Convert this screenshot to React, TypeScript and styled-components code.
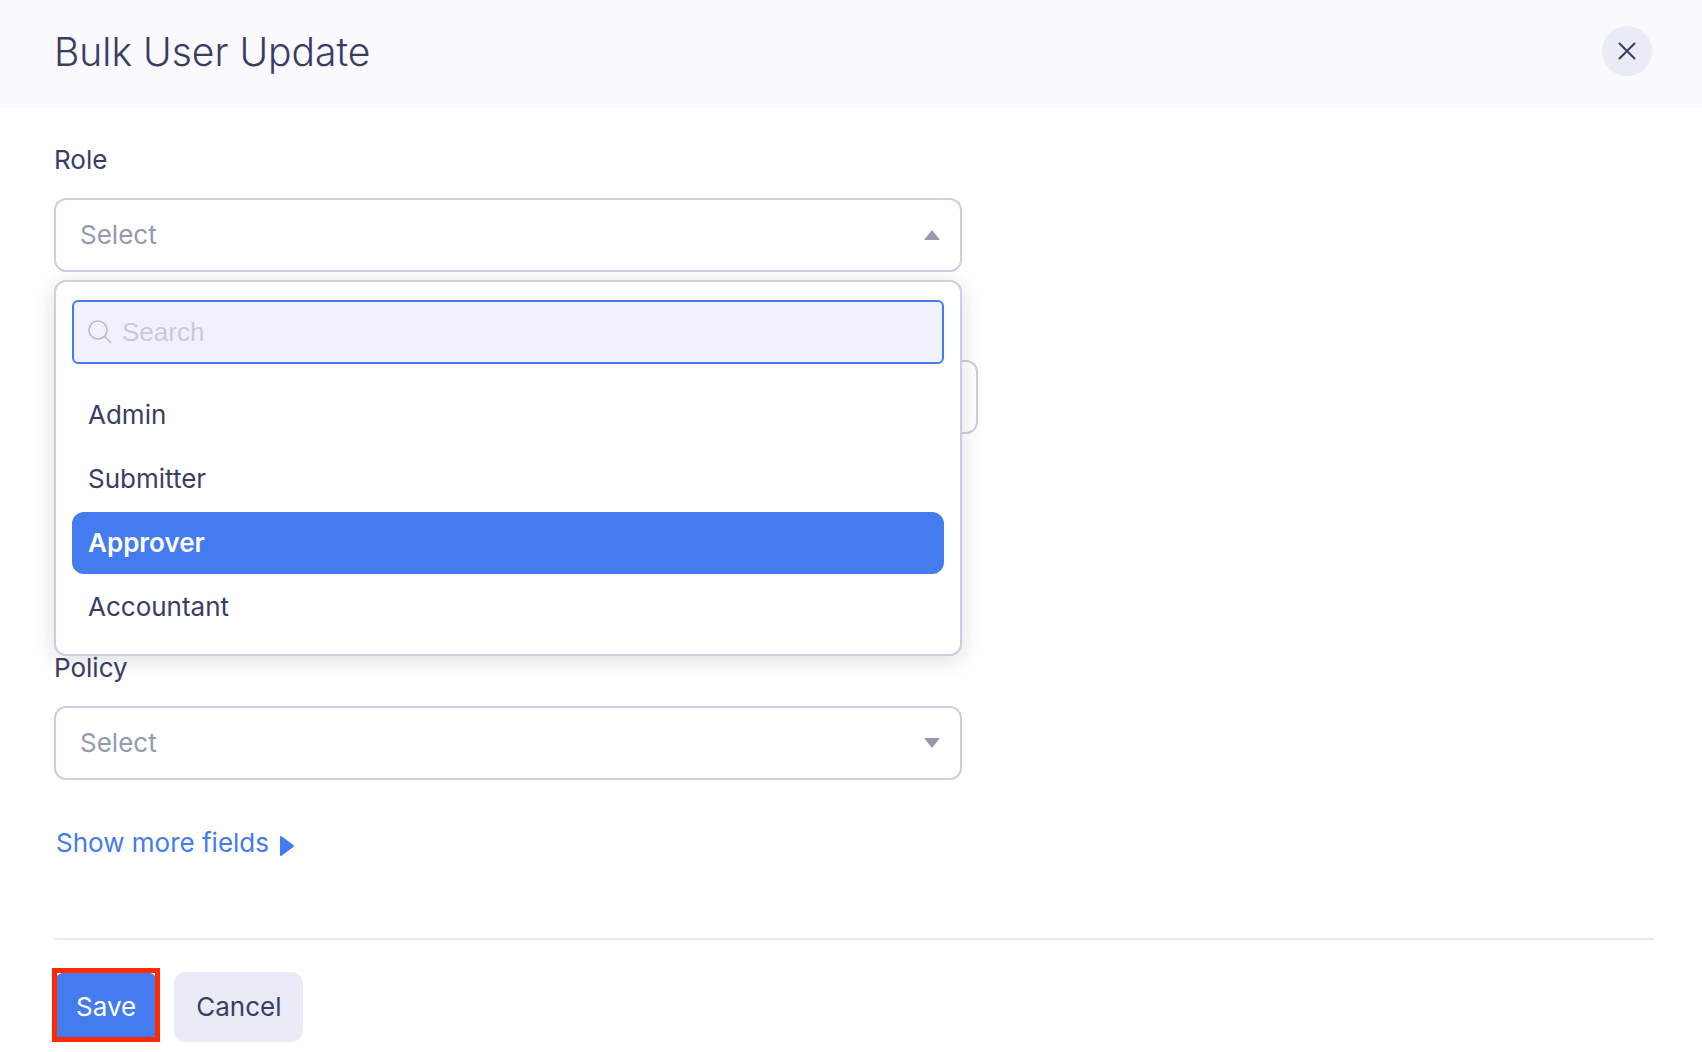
import React, { useState } from "react";
import styled, { createGlobalStyle } from "styled-components";

const color = {
  ink: "#393d64",
  muted: "#9599b0",
  border: "#cdcde3",
  primary: "#447bee",
  soft: "#e9ebf7",
  header: "#f9f9fe",
  search: "#f1f1fe",
  placeholder: "#c9c9de",
  divider: "#ebebf7",
  highlight: "#ff2a00",
};

const GlobalStyle = createGlobalStyle`
  *, *::before, *::after { box-sizing: border-box; }
  body {
    margin: 0;
    background: #fff;
    color: ${color.ink};
    font-family: Inter, "Liberation Sans", sans-serif;
    font-size: 26px;
    line-height: 32px;
  }
  button, select { font: inherit; color: inherit; }
`;

const Header = styled.header`
  display: flex;
  align-items: flex-start;
  justify-content: space-between;
  height: 108px;
  padding: 26px 50px 0 54px;
  background: ${color.header};
`;

const Title = styled.h1`
  margin: 0;
  font-size: 39px;
  font-weight: 300;
  line-height: 52px;
`;

const CloseButton = styled.button`
  display: grid;
  place-items: center;
  width: 50px;
  height: 50px;
  padding: 0;
  border: 0;
  border-radius: 50%;
  background: ${color.soft};
`;

const Form = styled.form`
  display: flex;
  flex-direction: column;
  padding: 36px 48px 8px 54px;
`;

const Field = styled.div<{ $wide?: boolean }>`
  position: relative;
  width: 100%;
  max-width: ${(p) => (p.$wide ? 924 : 908)}px;
`;

const Label = styled.label`
  display: block;
  margin-bottom: 22px;
`;

const SelectBox = styled.div`
  display: grid;
  align-items: center;

  > * { grid-area: 1 / 1; }
  > svg { justify-self: end; margin-right: 22px; pointer-events: none; }
`;

const NativeSelect = styled.select`
  appearance: none;
  width: 100%;
  height: 74px;
  padding: 0 64px 0 24px;
  border: 2px solid ${color.border};
  border-radius: 12px;
  background: #fff;
  color: ${color.muted};
  outline: none;
`;

const CoveredField = styled(Field)`
  margin: 88px 0 218px;
`;

const Popover = styled.div`
  position: absolute;
  z-index: 1;
  top: 100%;
  left: 0;
  right: 0;
  margin-top: 8px;
  padding: 18px 16px 16px;
  border: 2px solid ${color.border};
  border-radius: 12px;
  background: #fff;
  box-shadow: 0 4px 20px rgba(44, 48, 78, 0.16);
`;

const SearchBox = styled.label`
  display: flex;
  align-items: center;
  gap: 10px;
  height: 64px;
  padding: 0 14px;
  border: 2px solid ${color.primary};
  border-radius: 6px;
  background: ${color.search};
`;

const SearchInput = styled.input`
  flex: 1;
  min-width: 0;
  padding: 0;
  border: 0;
  outline: 0;
  background: transparent;
  color: ${color.ink};
  font: 26px/32px "Liberation Sans", sans-serif;

  &::placeholder { color: ${color.placeholder}; opacity: 1; }
`;

const Options = styled.ul`
  display: flex;
  flex-direction: column;
  gap: 2px;
  margin: 20px 0 0;
  padding: 0;
  list-style: none;
`;

const Option = styled.li<{ $active: boolean }>`
  padding: 15px 16px;
  border-radius: 12px;
  cursor: pointer;
  background: ${(p) => (p.$active ? color.primary : "transparent")};
  color: ${(p) => (p.$active ? "#fff" : color.ink)};
  font-weight: ${(p) => (p.$active ? 600 : 400)};
`;

const MoreButton = styled.button`
  display: flex;
  align-items: center;
  align-self: flex-start;
  gap: 11px;
  margin-top: 47px;
  padding: 0 2px;
  border: 0;
  background: none;
  color: ${color.primary};

  svg { margin-top: 6px; }
`;

const Actions = styled.footer`
  display: flex;
  gap: 16px;
  margin-top: 79px;
  padding-top: 32px;
  border-top: 2px solid ${color.divider};
`;

const Action = styled.button<{ $primary?: boolean }>`
  position: relative;
  height: 70px;
  padding: 0 22px;
  border: 0;
  border-radius: 12px;
  background: ${(p) => (p.$primary ? color.primary : color.soft)};
  color: ${(p) => (p.$primary ? "#fff" : color.ink)};
`;

const Highlight = styled.span`
  position: absolute;
  inset: -4px -2px 0;
  border: 5px solid ${color.highlight};
  pointer-events: none;
`;

const Caret = ({ up = false }: { up?: boolean }) => (
  <svg width="16" height="10" viewBox="0 0 16 10" aria-hidden="true">
    <path d={up ? "M0 10 8 0l8 10z" : "M0 0h16L8 10z"} fill={color.muted} />
  </svg>
);

const roles = ["Admin", "Submitter", "Approver", "Accountant"];

export default function App() {
  const [active, setActive] = useState("Approver");
  const [query, setQuery] = useState("");
  const visible = roles.filter((r) => r.toLowerCase().includes(query.toLowerCase()));

  return (
    <>
      <GlobalStyle />
      <Header>
        <Title>Bulk User Update</Title>
        <CloseButton type="button" aria-label="Close">
          <svg width="18" height="18" viewBox="0 0 18 18" fill="none" stroke={color.ink} strokeWidth="2" strokeLinecap="round" aria-hidden="true">
            <path d="M1.5 1.5l15 15M16.5 1.5l-15 15" />
          </svg>
        </CloseButton>
      </Header>
      <Form onSubmit={(e) => e.preventDefault()}>
        <Field>
          <Label htmlFor="role">Role</Label>
          <SelectBox>
            <NativeSelect id="role">
              <option>Select</option>
            </NativeSelect>
            <Caret up />
          </SelectBox>
          <Popover>
            <SearchBox>
              <svg width="24" height="24" viewBox="0 0 24 24" fill="none" stroke="#b9b9cc" strokeWidth="1.5" aria-hidden="true">
                <circle cx="10" cy="10" r="9" />
                <path d="M16.4 16.4l6.6 6.4" />
              </svg>
              <SearchInput
                type="text"
                placeholder="Search"
                aria-label="Search"
                value={query}
                onChange={(e) => setQuery(e.target.value)}
              />
            </SearchBox>
            <Options role="listbox" aria-label="Role">
              {visible.map((role) => (
                <Option
                  key={role}
                  role="option"
                  aria-selected={role === active}
                  $active={role === active}
                  onMouseEnter={() => setActive(role)}
                >
                  {role}
                </Option>
              ))}
            </Options>
          </Popover>
        </Field>
        <CoveredField $wide>
          <SelectBox>
            <NativeSelect aria-label="Select" />
          </SelectBox>
        </CoveredField>
        <Field>
          <Label htmlFor="policy">Policy</Label>
          <SelectBox>
            <NativeSelect id="policy">
              <option>Select</option>
            </NativeSelect>
            <Caret />
          </SelectBox>
        </Field>
        <MoreButton type="button">
          Show more fields
          <svg width="14" height="20" viewBox="0 0 14 20" aria-hidden="true">
            <path d="M1 1v18L13 10z" fill={color.primary} stroke={color.primary} strokeWidth="2" strokeLinejoin="round" />
          </svg>
        </MoreButton>
        <Actions>
          <Action type="submit" $primary>
            Save
            <Highlight />
          </Action>
          <Action type="button">Cancel</Action>
        </Actions>
      </Form>
    </>
  );
}
